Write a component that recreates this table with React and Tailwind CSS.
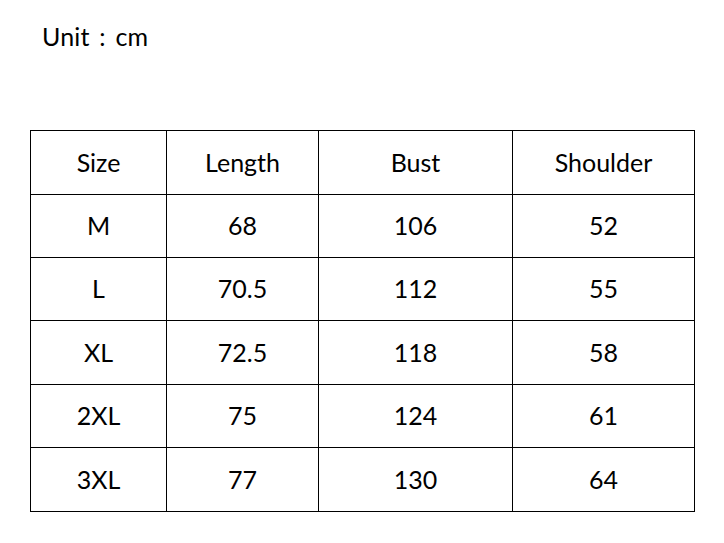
import React from 'react';

const rows = [
    ['Size', 'Length', 'Bust', 'Shoulder'],
    ['M', '68', '106', '52'],
    ['L', '70.5', '112', '55'],
    ['XL', '72.5', '118', '58'],
    ['2XL', '75', '124', '61'],
    ['3XL', '77', '130', '64'],
];

function App() {
    return (
        <div className="w-[724px] h-[543px] bg-white text-black font-['Lato',sans-serif] text-[25px]">
            <div className="pt-[21px] pl-[42px] leading-[30px] [word-spacing:3px] tracking-[0.2px]">Unit : cm</div>
            <div className="ml-[30px] mt-[79px] w-[665px] bg-black p-px grid grid-cols-[135px_151px_193px_181px] grid-rows-[63px_62px_62px_63px_62px_63px] gap-px">
                {rows.map((row, i) =>
                    row.map((cell, j) => (
                        <div key={i + '-' + j} className="bg-white flex items-center justify-center leading-none pb-px">
                            {cell}
                        </div>
                    ))
                )}
            </div>
        </div>
    );
}

export default App;
